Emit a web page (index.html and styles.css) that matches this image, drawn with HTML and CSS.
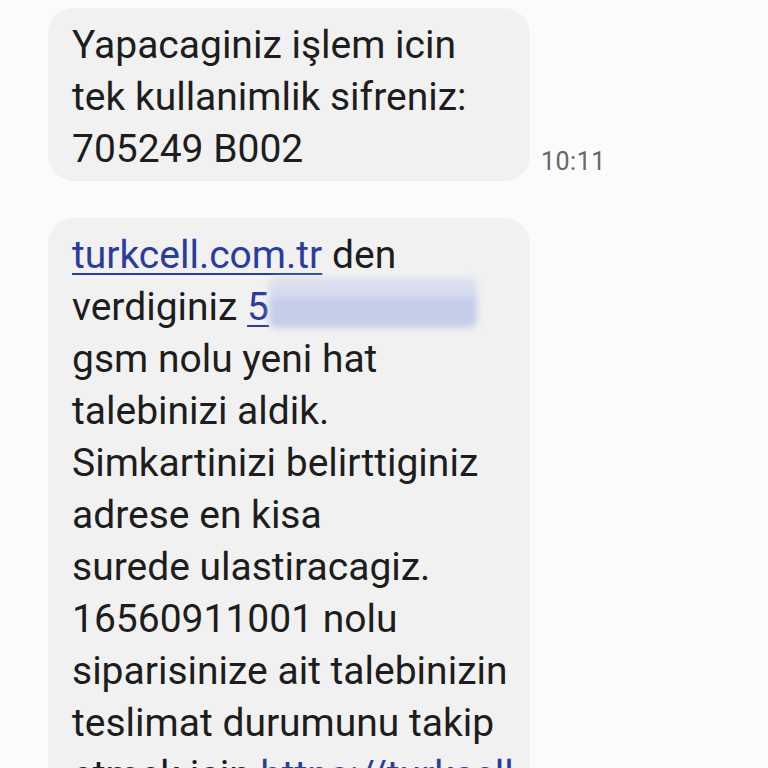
FILE: index.html
```html
<!DOCTYPE html>
<html lang="tr">
<head>
<meta charset="utf-8">
<title>Mesajlar</title>
<link rel="stylesheet" href="styles.css">
</head>
<body>
<main class="thread">
  <div class="row">
    <div class="bubble">Yapacaginiz işlem icin<br>tek kullanimlik sifreniz:<br>705249 B002</div>
    <span class="time">10:11</span>
  </div>
  <div class="row">
    <div class="bubble"><a class="link" href="#">turkcell.com.tr</a> den<br>verdiginiz <span class="masked"><a class="link" href="#">5</a><span class="blur"></span></span><br>gsm nolu yeni hat<br>talebinizi aldik.<br>Simkartinizi belirttiginiz<br>adrese en kisa<br>surede ulastiracagiz.<br>16560911001 nolu<br>siparisinize ait talebinizin<br>teslimat durumunu takip<br>etmek icin <a class="link" href="#">https://turkcell</a></div>
  </div>
</main>
</body>
</html>
```

FILE: styles.css
```css
html, body {
  margin: 0;
  padding: 0;
  height: 768px;
  overflow: hidden;
  background: #fbfbfb;
}
.thread {
  display: flex;
  flex-direction: column;
  gap: 37px;
  padding: 8px 0 0 48px;
  font-family: Roboto, "Liberation Sans", sans-serif;
}
.row {
  display: flex;
  align-items: flex-end;
  gap: 11px;
}
.bubble {
  box-sizing: border-box;
  width: 482px;
  background: #f1f1f1;
  border-radius: 26px;
  padding: 11px 20px 6px 24px;
  font-size: 39px;
  line-height: 52px;
  color: #1d1d1d;
  white-space: nowrap;
}
.time {
  font-size: 25px;
  letter-spacing: 0.5px;
  color: #666666;
  line-height: 30px;
  margin-bottom: 4px;
}
.link {
  color: #2a3c9c;
  text-decoration: underline;
  text-decoration-thickness: 2px;
  text-underline-offset: 5px;
}
.masked {
  position: relative;
}
.blur {
  position: absolute;
  left: 22px;
  top: -6px;
  width: 208px;
  height: 50px;
  background: linear-gradient(180deg, #dce0f0 0%, #d5daee 35%, #c6cde8 45%, #c6cde8 100%);
  filter: blur(3px);
  border-radius: 8px;
}
```
